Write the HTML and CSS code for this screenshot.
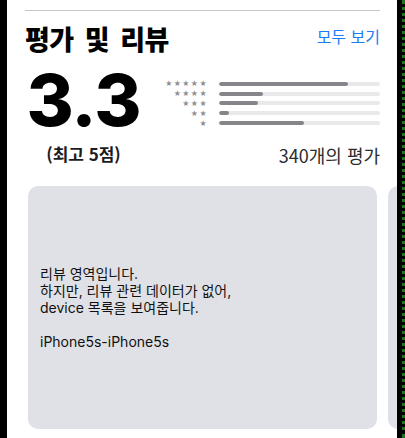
FILE: index.html
```html
<!DOCTYPE html>
<html lang="ko">
<head>
<meta charset="utf-8">
<title>평가 및 리뷰</title>
<link rel="stylesheet" href="styles.css">
</head>
<body>
<div class="frame">
  <div class="edge-left"></div>
  <main class="content">
    <hr class="divider">
    <header class="section-head">
      <h2 class="section-title">평가 및 리뷰</h2>
      <a class="see-all" href="#">모두 보기</a>
    </header>
    <section class="rating">
      <div class="score">3.3</div>
      <div class="histogram">
        <div class="hist-row"><span class="stars">★★★★★</span><span class="track"><span class="fill" style="width:80%"></span></span></div>
        <div class="hist-row"><span class="stars">★★★★</span><span class="track"><span class="fill" style="width:27.5%"></span></span></div>
        <div class="hist-row"><span class="stars">★★★</span><span class="track"><span class="fill" style="width:24.5%"></span></span></div>
        <div class="hist-row"><span class="stars">★★</span><span class="track"><span class="fill" style="width:6.5%"></span></span></div>
        <div class="hist-row"><span class="stars">★</span><span class="track"><span class="fill" style="width:53%"></span></span></div>
      </div>
      <div class="score-caption">(최고 5점)</div>
      <div class="count">340개의 평가</div>
    </section>
    <section class="cards">
      <article class="card">
        <p class="card-text">리뷰 영역입니다.<br>하지만, 리뷰 관련 데이터가 없어,<br>device 목록을 보여줍니다.<br><br>iPhone5s-iPhone5s</p>
      </article>
      <article class="card"></article>
    </section>
  </main>
  <div class="edge-right"></div>
</div>
</body>
</html>
```

FILE: styles.css
```css
* { box-sizing: border-box; }
html, body {
  margin: 0;
  padding: 0;
  height: 100%;
  background: #fff;
}
body {
  font-family: "Inter", "Noto Sans CJK KR", sans-serif;
  color: #000;
}
.frame {
  display: flex;
  height: 438px;
  overflow: hidden;
}
.edge-left {
  width: 7px;
  flex: none;
  background: #000;
}
.edge-right {
  width: 8px;
  flex: none;
  background: #000;
  border-right: 3px dotted #1a7a1a;
}
.content {
  flex: 1;
  min-width: 0;
  padding-top: 10px;
  overflow: hidden;
}
.divider {
  margin: 0 17px 0 18px;
  border: 0;
  height: 1px;
  background: #c6c6c8;
}
.section-head {
  display: flex;
  justify-content: space-between;
  align-items: center;
  margin: 11px 17px 0 18px;
  height: 34px;
}
.section-title {
  margin: 0;
  font-family: "Noto Sans CJK KR", sans-serif;
  font-size: 27px;
  font-weight: 900;
  line-height: 34px;
  letter-spacing: -0.5px;
  word-spacing: 4px;
}
.see-all {
  font-family: "Noto Sans CJK KR", sans-serif;
  font-size: 16px;
  color: #1a7cf5;
  text-decoration: none;
  line-height: 20px;
  margin-top: -6px;
}
.rating {
  display: grid;
  grid-template-columns: 117px 1fr;
  margin: 8px 17px 0 18px;
}
.score {
  font-family: "Inter", sans-serif;
  font-size: 72px;
  font-weight: 800;
  line-height: 72px;
  letter-spacing: -1px;
  text-align: center;
}
.histogram {
  display: flex;
  flex-direction: column;
  padding-top: 15px;
}
.hist-row {
  display: flex;
  align-items: center;
  height: 9.8px;
}
.stars {
  width: 66px;
  text-align: right;
  font-family: "DejaVu Sans", sans-serif;
  font-size: 8px;
  letter-spacing: 1.4px;
  color: #8e8e93;
  line-height: 9px;
  margin-right: 11px;
}
.track {
  flex: 1;
  height: 4px;
  border-radius: 2px;
  background: #e9e9eb;
  overflow: hidden;
  display: block;
}
.fill {
  display: block;
  height: 100%;
  border-radius: 2px;
  background: #86868a;
}
.score-caption {
  font-family: "Noto Sans CJK KR", sans-serif;
  font-size: 17px;
  font-weight: 700;
  text-align: center;
  line-height: 22px;
  margin-top: 7px;
  color: #1c1c1e;
}
.count {
  font-family: "Noto Sans CJK KR", sans-serif;
  font-size: 18px;
  text-align: right;
  line-height: 22px;
  margin-top: 8px;
  color: #2c2c2e;
}
.cards {
  display: flex;
  gap: 11px;
  margin-top: 20px;
  padding-left: 21px;
}
.card {
  flex: none;
  width: 349px;
  height: 243px;
  border-radius: 10px;
  background: #e0e1e6;
  display: flex;
  align-items: center;
  padding: 0 12px;
}
.card-text {
  margin: 0;
  font-family: "Inter", "Noto Sans CJK KR", sans-serif;
  font-size: 14px;
  line-height: 17px;
  color: #111;
}
```
